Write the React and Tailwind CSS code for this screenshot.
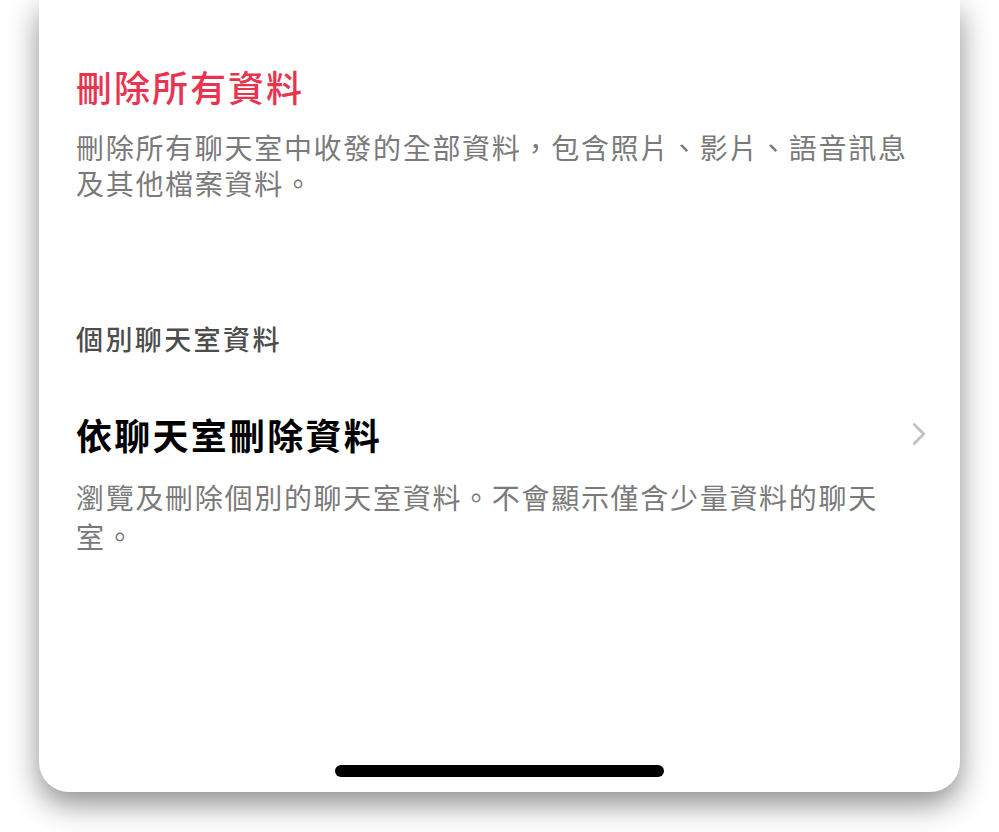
import React from "react";
import { ChevronRight } from "lucide-react";

const FONT = { fontFamily: '"Noto Sans CJK TC", "Noto Sans", sans-serif' };

export default function App() {
  return (
    <div className="h-[832px] w-full overflow-hidden bg-white px-[39px]" style={FONT}>
      {/* Phone sheet */}
      <div className="flex h-[792px] flex-col rounded-b-[30px] bg-white pl-[37px] pr-[36px] shadow-[0_12px_30px_rgba(0,0,0,0.45)]">
        {/* Delete all */}
        <div className="pt-[64px]">
          <h1 className="text-[36px] font-medium leading-[44px] tracking-[2px] text-[#e8344e]">刪除所有資料</h1>
          <p className="mt-[21px] text-[28px] leading-[36px] tracking-[1.7px] text-[#7a7a7a]">
            刪除所有聊天室中收發的全部資料，包含照片、影片、語音訊息及其他檔案資料。
          </p>
        </div>

        {/* Per chat */}
        <div className="mt-[120px]">
          <h2 className="text-[27px] font-medium leading-[36px] tracking-[2.4px] text-[#4d4d4d]">個別聊天室資料</h2>

          <div className="mt-[55px] flex items-center justify-between">
            <span className="text-[36px] font-bold leading-[44px] tracking-[2.25px] text-black">依聊天室刪除資料</span>
            <ChevronRight className="mr-[-14px] h-[38px] w-[38px] text-[#c2c2c2]" strokeWidth={1.8} />
          </div>
          <p className="mt-[22px] w-[820px] text-[28px] leading-[39px] tracking-[1.7px] text-[#7a7a7a]">
            瀏覽及刪除個別的聊天室資料。不會顯示僅含少量資料的聊天室。
          </p>
        </div>

        <div className="flex-1" />

        {/* Home indicator */}
        <div className="mb-[15px] flex justify-center pr-[1px]">
          <div className="h-[12px] w-[329px] rounded-full bg-black" />
        </div>
      </div>
    </div>
  );
}
